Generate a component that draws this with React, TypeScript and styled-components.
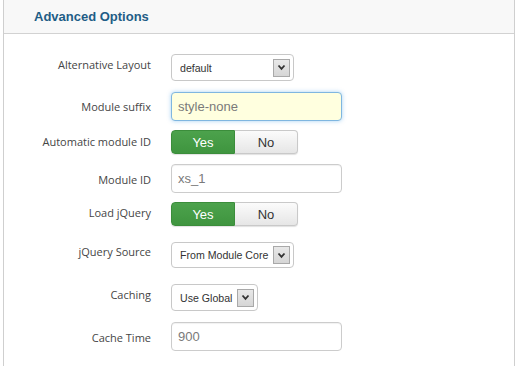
import React from "react";
import styled, { createGlobalStyle } from "styled-components";

const Global = createGlobalStyle`
  html, body { margin: 0; padding: 0; background: #fff; }
  body { font-family: "Open Sans", Arial, sans-serif; }
`;

const Panel = styled.div`
  margin-left: 3px;
  width: 510px;
  height: 366px;
  border-left: 1px solid #cfcfcf;
  border-right: 1px solid #cfcfcf;
  box-sizing: content-box;
`;

const Header = styled.div`
  height: 33px;
  background: #f8f8f8;
  border-bottom: 1px solid #d2d2d2;
  display: flex;
  align-items: center;
  padding-left: 30px;
`;

const Title = styled.h3`
  margin: 0;
  font-family: "Liberation Sans", Arial, sans-serif;
  font-weight: bold;
  font-size: 13px;
  color: #1f5d86;
`;

const Body = styled.div`
  padding-top: 20px;
  display: flex;
  flex-direction: column;
`;

const Row = styled.div<{ $mt: number }>`
  display: flex;
  align-items: flex-start;
  margin-top: ${(p) => p.$mt}px;
`;

const Label = styled.label<{ $pt: number }>`
  width: 147px;
  margin-right: 20px;
  padding-top: ${(p) => p.$pt}px;
  line-height: 15px;
  text-align: right;
  font-family: "Open Sans", sans-serif;
  font-size: 11px;
  color: #454545;
`;

const Select = styled.div<{ $w: number; $h: number }>`
  box-sizing: border-box;
  width: ${(p) => p.$w}px;
  height: ${(p) => p.$h}px;
  border: 1px solid #c8c8c8;
  border-radius: 4px;
  background: #fff;
  display: flex;
  align-items: center;
  justify-content: space-between;
  padding: 0 3px 0 8px;
  font-family: "Liberation Sans", Arial, sans-serif;
  font-size: 10.6px;
  color: #333;
  white-space: nowrap;
`;

const SelectText = styled.span`
  flex: 1;
  min-width: 0;
  overflow: hidden;
`;

const Arrow = styled.span`
  flex: none;
  box-sizing: border-box;
  width: 17px;
  height: 18px;
  border: 1px solid #a9a9a9;
  background: linear-gradient(#e8e8e8, #d6d6d6);
  display: flex;
  align-items: center;
  justify-content: center;
`;

const Input = styled.div<{ $focus?: boolean }>`
  box-sizing: border-box;
  width: 171px;
  height: 29px;
  border: 1px solid ${(p) => (p.$focus ? "#7fb6e0" : "#cccccc")};
  border-radius: 4px;
  background: ${(p) => (p.$focus ? "#ffffdf" : "#fff")};
  box-shadow: ${(p) => (p.$focus ? "0 0 4px rgba(82,168,236,0.5)" : "inset 0 1px 1px rgba(0,0,0,0.06)")};
  display: flex;
  align-items: center;
  padding-left: 6px;
  font-family: "Liberation Sans", Arial, sans-serif;
  font-size: 13px;
  color: #7a7a7a;
`;

const Toggle = styled.div`
  display: flex;
  height: 24px;
  border-radius: 4px;
  box-shadow: 0 1px 1px rgba(0,0,0,0.12);
`;

const ToggleBtn = styled.span<{ $on?: boolean }>`
  box-sizing: border-box;
  width: ${(p) => (p.$on ? 64 : 63)}px;
  display: flex;
  align-items: center;
  justify-content: center;
  font-family: "Liberation Sans", Arial, sans-serif;
  font-size: 13px;
  color: ${(p) => (p.$on ? "#fff" : "#333")};
  background: ${(p) => (p.$on ? "linear-gradient(#4ca24c, #3f953f)" : "linear-gradient(#fbfbfb, #e6e6e6)")};
  border: 1px solid ${(p) => (p.$on ? "#3b8d3b" : "#c9c9c9")};
  border-radius: ${(p) => (p.$on ? "4px 0 0 4px" : "0 4px 4px 0")};
  ${(p) => (p.$on ? "" : "border-left: none;")}
`;

const Chevron = () => (
  <svg width="9" height="7" viewBox="0 0 9 7">
    <path d="M1.5 1.5 L4.5 4.8 L7.5 1.5" stroke="#333" strokeWidth="1.8" fill="none" />
  </svg>
);

const SelectBox = ({ text, w, h }: { text: string; w: number; h: number }) => (
  <Select $w={w} $h={h}>
    <SelectText>{text}</SelectText>
    <Arrow>
      <Chevron />
    </Arrow>
  </Select>
);

const YesNo = () => (
  <Toggle>
    <ToggleBtn $on>Yes</ToggleBtn>
    <ToggleBtn>No</ToggleBtn>
  </Toggle>
);

export default function App() {
  return (
    <>
      <Global />
      <Panel>
        <Header>
          <Title>Advanced Options</Title>
        </Header>
        <Body>
          <Row $mt={0}>
            <Label $pt={3}>Alternative Layout</Label>
            <SelectBox text="default" w={123} h={27} />
          </Row>
          <Row $mt={11}>
            <Label $pt={7}>Module suffix</Label>
            <Input $focus>style-none</Input>
          </Row>
          <Row $mt={9}>
            <Label $pt={4}>Automatic module ID</Label>
            <YesNo />
          </Row>
          <Row $mt={10}>
            <Label $pt={8}>Module ID</Label>
            <Input>xs_1</Input>
          </Row>
          <Row $mt={9}>
            <Label $pt={3}>Load jQuery</Label>
            <YesNo />
          </Row>
          <Row $mt={16}>
            <Label $pt={2}>jQuery Source</Label>
            <SelectBox text="From Module Core" w={123} h={26} />
          </Row>
          <Row $mt={16}>
            <Label $pt={3}>Caching</Label>
            <SelectBox text="Use Global" w={87} h={27} />
          </Row>
          <Row $mt={11}>
            <Label $pt={8}>Cache Time</Label>
            <Input>900</Input>
          </Row>
        </Body>
      </Panel>
    </>
  );
}
